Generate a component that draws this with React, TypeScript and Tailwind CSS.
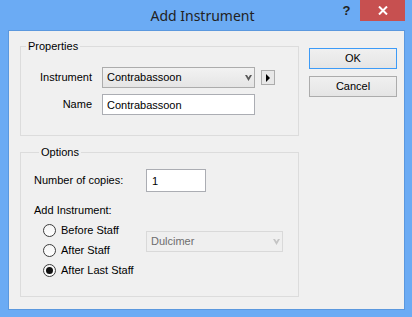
import { useState } from "react";

function Chevron({ color }: { color: string }) {
    return (
        <svg width="7" height="6" viewBox="0 0 7 6" className="shrink-0">
            <path d="M0 0h2l1.5 2.5L5 0h2L3.5 6z" fill={color} />
        </svg>
    );
}

function Radio({ label, checked, onClick }: { label: string; checked: boolean; onClick: () => void }) {
    return (
        <div className="flex items-center h-[20px] cursor-default" onClick={onClick}>
            <div className="w-[13px] h-[13px] rounded-full border border-[#3c3c3c] bg-gradient-to-b from-[#f4f4f4] to-white flex items-center justify-center">
                {checked && <div className="w-[7px] h-[7px] rounded-full bg-[#111]" />}
            </div>
            <span className="ml-[5px]">{label}</span>
        </div>
    );
}

export default function App() {
    const [position, setPosition] = useState("last");
    const [name, setName] = useState("Contrabassoon");
    const [copies, setCopies] = useState("1");

    return (
        <div
            className="w-[412px] h-[317px] bg-[#6babf4] flex flex-col overflow-hidden text-[11px] leading-[13px] text-black"
            style={{ fontFamily: '"Liberation Sans", Arial, sans-serif' }}
        >
            {/* title bar */}
            <div className="h-[30px] flex shrink-0">
                <div className="flex-1" />
                <div className="self-center text-[14px] leading-[20px] text-[#222] pt-[1px]" style={{ fontFamily: '"Noto Sans", sans-serif' }}>
                    Add Instrument
                </div>
                <div className="flex-1 flex justify-end items-start pr-[7px]">
                    <div className="w-[27px] h-[21px] flex items-center justify-center text-[13px] font-bold text-[#222] pb-[1px]">?</div>
                    <div className="w-[45px] h-[21px] bg-[#c75050] flex items-center justify-center">
                        <svg width="10" height="9" viewBox="0 0 10 9">
                            <path d="M1 0.5l8 8M9 0.5l-8 8" stroke="white" strokeWidth="2" />
                        </svg>
                    </div>
                </div>
            </div>

            {/* client area */}
            <div className="ml-[8px] w-[397px] h-[280px] bg-[#f0f0f0] border border-[#5b98de] flex">
                <div className="pl-[11px] w-[290px] flex flex-col">
                    <fieldset className="mt-[9px] border border-[#dcdcdc] pt-[14px] pb-[20px]">
                        <legend className="ml-[5px] px-[2px]">Properties</legend>
                        <div className="flex items-center h-[21px]">
                            <span className="w-[71px] text-right">Instrument</span>
                            <div className="ml-[10px] w-[153px] h-[21px] border border-[#acacac] bg-gradient-to-b from-[#f2f2f2] to-[#e5e5e5] flex items-center pl-[4px] pr-[2px]">
                                <span className="flex-1">Contrabassoon</span>
                                <Chevron color="#5a5a5a" />
                            </div>
                            <div className="ml-[6px] w-[14px] h-[15px] border border-[#acacac] bg-[#e8e8e8] flex items-center justify-center">
                                <svg width="4" height="8" viewBox="0 0 4 8">
                                    <path d="M0 0l4 4-4 4z" fill="#000" />
                                </svg>
                            </div>
                        </div>
                        <div className="flex items-center h-[21px] mt-[6px]">
                            <span className="w-[71px] text-right">Name</span>
                            <input
                                value={name}
                                onChange={(e) => setName(e.target.value)}
                                className="ml-[10px] w-[153px] h-[21px] border border-[#abadb3] bg-white px-[4px] text-[11px] outline-none"
                            />
                        </div>
                    </fieldset>

                    <fieldset className="mt-[10px] border border-[#dcdcdc] pt-[10px] pb-[16px] pl-[13px]">
                        <legend className="ml-[5px] px-[2px]">Options</legend>
                        <div className="flex items-center h-[23px]">
                            <span className="w-[112px]">Number of copies:</span>
                            <input
                                value={copies}
                                onChange={(e) => setCopies(e.target.value)}
                                className="w-[60px] h-[23px] border border-[#abadb3] bg-white px-[5px] text-[11px] outline-none"
                            />
                        </div>
                        <div className="mt-[12px]">Add Instrument:</div>
                        <div className="flex mt-[3px]">
                            <div className="w-[112px] pl-[9px]">
                                <Radio label="Before Staff" checked={position === "before"} onClick={() => setPosition("before")} />
                                <Radio label="After Staff" checked={position === "after"} onClick={() => setPosition("after")} />
                                <Radio label="After Last Staff" checked={position === "last"} onClick={() => setPosition("last")} />
                            </div>
                            <div className="mt-[11px] w-[137px] h-[21px] border border-[#d9d9d9] bg-[#efefef] flex items-center pl-[4px] pr-[2px] text-[#6d6d6d]">
                                <span className="flex-1">Dulcimer</span>
                                <Chevron color="#c4c4c4" />
                            </div>
                        </div>
                    </fieldset>
                </div>

                <div className="ml-[10px] mt-[17px] flex flex-col gap-[7px]">
                    <button className="w-[88px] h-[21px] border border-[#3d9bf7] bg-gradient-to-b from-[#f0f0f0] to-[#e5e5e5] text-[11px]">
                        OK
                    </button>
                    <button className="w-[88px] h-[21px] border border-[#acacac] bg-gradient-to-b from-[#f0f0f0] to-[#e5e5e5] text-[11px]">
                        Cancel
                    </button>
                </div>
            </div>
        </div>
    );
}
